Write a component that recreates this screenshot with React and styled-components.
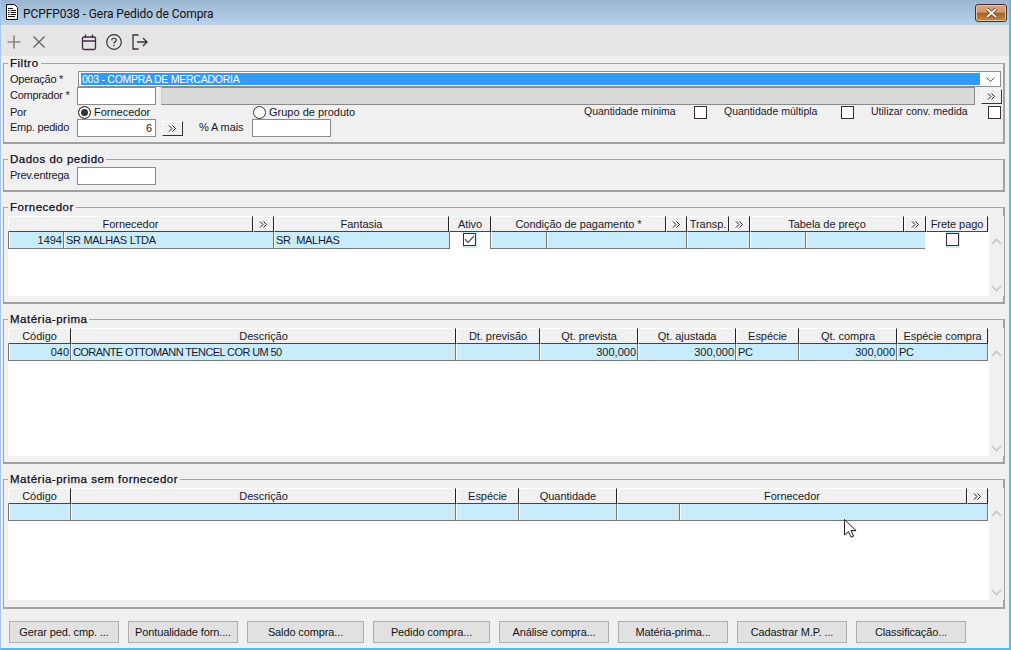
import React from "react";
import styled, { createGlobalStyle } from "styled-components";

const GlobalStyle = createGlobalStyle`
    html, body {
        margin: 0;
        padding: 0;
        background: #f0f0f0;
    }
    * {
        box-sizing: border-box;
    }
`;

const fornecedorHead = [
    { w: 245, label: "Fornecedor" },
    { w: 21, more: true },
    { w: 175, label: "Fantasia" },
    { w: 42, label: "Ativo" },
    { w: 175, label: "Condição de pagamento *" },
    { w: 21, more: true },
    { w: 42, label: "Transp." },
    { w: 21, more: true },
    { w: 154, label: "Tabela de preço" },
    { w: 22, more: true },
    { w: 62, label: "Frete pago" },
];

const fornecedorRow = [
    { w: 55, text: "1494", right: true },
    { w: 210, text: "SR MALHAS LTDA", tight: 0.3 },
    { w: 176, text: "SR  MALHAS", tight: 0.3 },
    { w: 41, check: "on" },
    { w: 56 },
    { w: 140 },
    { w: 63 },
    { w: 56 },
    { w: 120 },
    { w: 63, check: "off" },
];

const materiaHead = [
    { w: 63, label: "Código" },
    { w: 385, label: "Descrição" },
    { w: 84, label: "Dt. previsão" },
    { w: 98, label: "Qt. prevista" },
    { w: 98, label: "Qt. ajustada" },
    { w: 63, label: "Espécie" },
    { w: 98, label: "Qt. compra" },
    { w: 91, label: "Espécie compra" },
];

const materiaRow = [
    { w: 62, text: "040", right: true },
    { w: 385, text: "CORANTE OTTOMANN TENCEL COR UM 50", tight: 0.6 },
    { w: 84 },
    { w: 98, text: "300,000", right: true },
    { w: 98, text: "300,000", right: true },
    { w: 63, text: "PC", tight: 0.3 },
    { w: 98, text: "300,000", right: true },
    { w: 92, text: "PC", tight: 0.3 },
];

const semFornHead = [
    { w: 63, label: "Código" },
    { w: 385, label: "Descrição" },
    { w: 63, label: "Espécie" },
    { w: 98, label: "Quantidade" },
    { w: 350, label: "Fornecedor" },
    { w: 21, more: true },
];

const semFornRow = [
    { w: 62 },
    { w: 385 },
    { w: 63 },
    { w: 98 },
    { w: 63 },
    { w: 309 },
];

const footerButtons = [
    { w: 110, label: "Gerar ped. cmp. ..." },
    { w: 110, label: "Pontualidade forn...." },
    { w: 117, label: "Saldo compra..." },
    { w: 117, label: "Pedido compra..." },
    { w: 110, label: "Análise compra..." },
    { w: 110, label: "Matéria-prima..." },
    { w: 110, label: "Cadastrar M.P. ..." },
    { w: 110, label: "Classificação..." },
];

const MoreIcon = () => (
    <svg width="9" height="7" viewBox="0 0 9 7" fill="none" stroke="#222" strokeWidth="1">
        <path d="M1 0.5 L4 3.5 L1 6.5 M4.5 0.5 L7.5 3.5 L4.5 6.5" />
    </svg>
);

const ScrollArrow = ({ down }) => (
    <svg width="11" height="7" viewBox="0 0 11 7" fill="none" stroke="#c4c4c4" strokeWidth="1.6">
        <path d={down ? "M1 1 L5.5 5.5 L10 1" : "M1 6 L5.5 1.5 L10 6"} />
    </svg>
);

const Scrollbar = () => (
    <ScrollTrack>
        <ScrollArrow />
        <ScrollArrow down />
    </ScrollTrack>
);

const DataGrid = ({ head, row, height }) => (
    <GridBody $height={height}>
        <GridMain>
            <HeadRow>
                {head.map((col, i) =>
                    col.more ? (
                        <MoreHead key={i} $w={col.w}>
                            <MoreIcon />
                        </MoreHead>
                    ) : (
                        <HeadCell key={i} $w={col.w}>
                            {col.label}
                        </HeadCell>
                    ),
                )}
            </HeadRow>
            <DataRow>
                {row.map((cell, i) =>
                    cell.check ? (
                        <CheckCell key={i} $w={cell.w}>
                            <CheckBack>
                                <CheckBox>
                                    {cell.check === "on" && (
                                        <svg width="11" height="9" viewBox="0 0 11 9" fill="none" stroke="#5a5a5a" strokeWidth="1.3">
                                            <path d="M1 4 L4 7.5 L10 1" />
                                        </svg>
                                    )}
                                </CheckBox>
                            </CheckBack>
                        </CheckCell>
                    ) : (
                        <DataCell key={i} $w={cell.w} $right={cell.right} $tight={cell.tight}>
                            {cell.text}
                        </DataCell>
                    ),
                )}
            </DataRow>
        </GridMain>
        <Scrollbar />
    </GridBody>
);

const App = () => (
    <Page>
        <GlobalStyle />
        <TitleBar>
            <TitleIcon width="14" height="17" viewBox="0 0 14 17">
                <path d="M1.5 0.5 H9.5 L12.5 3.5 V15.5 H1.5 Z" fill="#fff" stroke="#111" />
                <path d="M3 4.5 H8 M3 6.5 H4.5 M5.5 6.5 H11 M3 8.5 H4.5 M5.5 8.5 H11 M3 10.5 H4.5 M5.5 10.5 H11 M3 12.5 H10" stroke="#111" />
            </TitleIcon>
            <TitleText>PCPFP038 - Gera Pedido de Compra</TitleText>
            <CloseButton>
                <svg width="13" height="10" viewBox="0 0 13 10">
                    <path d="M2 1 L11 9 M11 1 L2 9" stroke="#4c3a2a" strokeWidth="3.4" />
                    <path d="M2 1 L11 9 M11 1 L2 9" stroke="#f4f1ec" strokeWidth="2" />
                </svg>
            </CloseButton>
        </TitleBar>
        <Toolbar>
            <ToolSvg width="16" height="16" viewBox="0 0 16 16" stroke="#8a8a8a" $after={5}>
                <path d="M8 1.5 V14.5 M1.5 8 H14.5" strokeWidth="1.7" />
            </ToolSvg>
            <ToolSvg width="16" height="16" viewBox="0 0 16 16" stroke="#5f5f5f" $after={9}>
                <path d="M2.5 2.5 L13.5 13.5 M13.5 2.5 L2.5 13.5" strokeWidth="1.2" />
            </ToolSvg>
            <ToolSvg width="16" height="17" viewBox="0 0 16 17" stroke="#3d2f3a" $after={34}>
                <rect x="1.5" y="3" width="13" height="12.5" rx="1.5" strokeWidth="1.3" />
                <path d="M1.5 7 H14.5 M4.5 0.5 V4 M11.5 0.5 V4" strokeWidth="1.3" />
            </ToolSvg>
            <ToolSvg width="16" height="16" viewBox="0 0 16 16" stroke="#3d2f3a" $after={9}>
                <circle cx="8" cy="8" r="7.3" strokeWidth="1.2" />
                <path d="M5.8 6.2 C5.8 3.6 10.2 3.6 10.2 6.2 C10.2 7.8 8 7.8 8 9.6 M8 10.8 V12.2" strokeWidth="1.2" />
            </ToolSvg>
            <ToolSvg width="16" height="16" viewBox="0 0 16 16" stroke="#3d2f3a" $after={10}>
                <path d="M6.5 1 H1 V15 H6.5 M5 8 H15 M11 4 L15 8 L11 12" strokeWidth="1.3" />
            </ToolSvg>
        </Toolbar>
        <Content>
            <Panel $height={88}>
                <Legend>Filtro</Legend>
                <FormRow $height={16}>
                    <FieldLabel>Operação *</FieldLabel>
                    <SelectBox>
                        <SelectValue>003 - COMPRA DE MERCADORIA</SelectValue>
                        <SelectArrow width="9" height="6" viewBox="0 0 9 6" fill="none" stroke="#555">
                            <path d="M0.5 0.5 L4.5 4.5 L8.5 0.5" />
                        </SelectArrow>
                    </SelectBox>
                </FormRow>
                <FormRow $height={18}>
                    <FieldLabel $up>Comprador *</FieldLabel>
                    <TextBox />
                    <ReadOnlyBox />
                    <MoreButton>
                        <MoreIcon />
                    </MoreButton>
                </FormRow>
                <FormRow $height={14}>
                    <FieldLabel>Por</FieldLabel>
                    <RadioOption $w={174}>
                        <Radio $on />
                        Fornecedor
                    </RadioOption>
                    <RadioOption $w={331}>
                        <Radio />
                        Grupo de produto
                    </RadioOption>
                    <CheckLabel $w={110}>Quantidade mínima</CheckLabel>
                    <CheckBox />
                    <CheckLabel $w={117} $gap={17}>Quantidade múltipla</CheckLabel>
                    <CheckBox />
                    <CheckLabel $w={117} $gap={17}>Utilizar conv. medida</CheckLabel>
                    <CheckBox />
                </FormRow>
                <FormRow $height={18}>
                    <FieldLabel $up>Emp. pedido</FieldLabel>
                    <TextBox $right>6</TextBox>
                    <MoreButton>
                        <MoreIcon />
                    </MoreButton>
                    <InlineLabel>% A mais</InlineLabel>
                    <TextBox />
                </FormRow>
            </Panel>
            <Panel $height={40}>
                <Legend>Dados do pedido</Legend>
                <FormRow $height={18}>
                    <FieldLabel $up>Prev.entrega</FieldLabel>
                    <TextBox />
                </FormRow>
            </Panel>
            <GridPanel $height={104}>
                <Legend>Fornecedor</Legend>
                <DataGrid head={fornecedorHead} row={fornecedorRow} height={80} />
            </GridPanel>
            <GridPanel $height={152}>
                <Legend>Matéria-prima</Legend>
                <DataGrid head={materiaHead} row={materiaRow} height={128} />
            </GridPanel>
            <GridPanel $height={137}>
                <Legend>Matéria-prima sem fornecedor</Legend>
                <DataGrid head={semFornHead} row={semFornRow} height={112} />
            </GridPanel>
        </Content>
        <Footer>
            {footerButtons.map((b) => (
                <FooterButton key={b.label} $w={b.w}>
                    {b.label}
                </FooterButton>
            ))}
        </Footer>
        <Cursor width="18" height="22" viewBox="0 0 18 22">
            <path d="M2.5 2.5 V18.5 L6.5 15 L9 20.5 L12 19 L9.5 14 H14.5 Z" fill="#b9b9b9" opacity="0.5" />
            <path d="M1.5 1.5 V17 L5.5 13.5 L8 19 L10.5 18 L8 12.5 H13 Z" fill="#fff" stroke="#2a1a2a" strokeWidth="1" />
        </Cursor>
    </Page>
);

const Page = styled.div`
    position: relative;
    width: 1011px;
    height: 650px;
    overflow: hidden;
    display: flex;
    flex-direction: column;
    background: #f0f0f0;
    font-family: "Liberation Sans", Arial, sans-serif;
    font-size: 11px;
    color: #1a1a2a;
    border-left: 1px solid #a4c6ea;
    border-right: 2px solid #4fc0ea;
    border-bottom: 2px solid #4fc0ea;
`;

const TitleBar = styled.div`
    height: 25px;
    flex: none;
    display: flex;
    align-items: center;
    padding: 0 2px 0 4px;
    background: linear-gradient(#9bb6d0, #b9d2ec);
`;

const TitleIcon = styled.svg`
    flex: none;
`;

const TitleText = styled.div`
    flex: 1;
    margin-left: 4px;
    padding-top: 2px;
    font-family: Roboto, "Liberation Sans", sans-serif;
    font-size: 12px;
    letter-spacing: -0.08px;
    color: #111;
`;

const CloseButton = styled.div`
    width: 32px;
    height: 18px;
    display: flex;
    align-items: center;
    justify-content: center;
    border: 1px solid #4a2c25;
    border-radius: 3px;
    box-shadow: inset 0 0 0 1px #e8c5a8;
    background: linear-gradient(#d8a780 0, #d09a6e 45%, #ab5f1f 50%, #c58a4f 100%);
`;

const Toolbar = styled.div`
    height: 31px;
    flex: none;
    display: flex;
    align-items: center;
    padding-top: 3px;
    background: #e5e5e5;
`;

const ToolSvg = styled.svg`
    flex: none;
    fill: none;
    margin-left: ${(p) => p.$after}px;
`;

const Content = styled.div`
    display: flex;
    flex-direction: column;
    gap: 8px;
    padding: 0 4px 0 2px;
`;

const Panel = styled.fieldset`
    height: ${(p) => p.$height}px;
    min-width: 0;
    margin: 0;
    padding: 1px 2px 0 3px;
    border: solid #a2a2a2;
    border-width: 1px 2px 2px 1px;
`;

const GridPanel = styled(Panel)`
    padding: 2px 0 0 3px;
`;

const Legend = styled.legend`
    margin-left: 1px;
    padding: 0 2px;
    font-size: 11.5px;
    line-height: 14px;
    letter-spacing: 0.5px;
    color: #0c0c1c;
    -webkit-text-stroke: 0.25px #0c0c1c;
`;

const FormRow = styled.div`
    height: ${(p) => p.$height}px;
    margin-left: 3px;
    display: flex;
    align-items: center;
`;

const FieldLabel = styled.div`
    width: 67px;
    flex: none;
    padding-bottom: ${(p) => (p.$up ? 2 : 0)}px;
    letter-spacing: -0.25px;
`;

const InlineLabel = styled.div`
    width: 69px;
    flex: none;
    padding: 0 0 2px 16px;
    letter-spacing: -0.1px;
    white-space: nowrap;
`;

const SelectBox = styled.div`
    width: 924px;
    height: 16px;
    margin-left: 1px;
    display: flex;
    align-items: center;
    padding: 0 0 0 2px;
    background: #fff;
    border: 1px solid #8f8f8f;
`;

const SelectValue = styled.div`
    flex: 1;
    height: 12px;
    line-height: 12px;
    padding-left: 1px;
    font-size: 10.5px;
    letter-spacing: -0.25px;
    background: #3399ff;
    color: #fff;
`;

const SelectArrow = styled.svg`
    flex: none;
    margin: 2px 5px 0 6px;
`;

const TextBox = styled.div`
    width: 79px;
    height: 18px;
    flex: none;
    line-height: 16px;
    padding-right: 3px;
    text-align: ${(p) => (p.$right ? "right" : "left")};
    background: #fff;
    border: 1px solid #8a8a8a;
`;

const ReadOnlyBox = styled.div`
    width: 814px;
    height: 18px;
    flex: none;
    margin-left: 5px;
    background: #dadada;
    border: 1px solid #8a8a8a;
    border-left-color: #cfcfcf;
`;

const MoreButton = styled.div`
    width: 21px;
    height: 15px;
    flex: none;
    margin-left: 6px;
    display: flex;
    align-items: center;
    justify-content: center;
    background: #f0f0f0;
    border: 1px solid #fff;
    border-right-color: #333;
    border-bottom-color: #333;
`;

const RadioOption = styled.div`
    width: ${(p) => p.$w}px;
    flex: none;
    display: flex;
    align-items: center;
    gap: 3px;
    margin-left: 1px;
    white-space: nowrap;
`;

const Radio = styled.span`
    width: 13px;
    height: 13px;
    flex: none;
    border-radius: 50%;
    border: 1px solid #333;
    background: ${(p) => (p.$on ? "#333" : "#fff")};
    box-shadow: ${(p) => (p.$on ? "inset 0 0 0 2px #fff" : "none")};
`;

const CheckLabel = styled.div`
    width: ${(p) => p.$w}px;
    margin-left: ${(p) => p.$gap || 0}px;
    padding-bottom: 2px;
    flex: none;
    white-space: nowrap;
    font-size: 10.5px;
`;

const CheckBox = styled.span`
    width: 13px;
    height: 13px;
    flex: none;
    display: flex;
    align-items: center;
    justify-content: center;
    background: #fff;
    border: 1px solid #3a2a3a;
`;

const GridBody = styled.div`
    height: ${(p) => p.$height}px;
    margin-left: 1px;
    display: flex;
    background: #fff;
`;

const GridMain = styled.div`
    width: 981px;
    flex: none;
`;

const HeadRow = styled.div`
    height: 16px;
    display: flex;
    background: #f0f0f0;
`;

const HeadCell = styled.div`
    width: ${(p) => p.$w}px;
    height: 16px;
    flex: none;
    line-height: 14px;
    text-align: center;
    white-space: nowrap;
    overflow: hidden;
    letter-spacing: -0.05px;
    background: #f0f0f0;
    border: 1px solid #fff;
    border-right-color: #222;
    border-bottom-color: #444;
`;

const MoreHead = styled(HeadCell)`
    display: flex;
    align-items: center;
    justify-content: center;
`;

const DataRow = styled.div`
    height: 17px;
    display: flex;
    background: #fff;
`;

const DataCell = styled.div`
    width: ${(p) => p.$w}px;
    height: 17px;
    flex: none;
    line-height: 16px;
    padding: 0 1px 0 2px;
    text-align: ${(p) => (p.$right ? "right" : "left")};
    letter-spacing: ${(p) => (p.$tight ? -p.$tight : 0)}px;
    white-space: pre;
    background: #c8ecfb;
    border-left: 1px solid #777;
    border-bottom: 1px solid #777;
    box-shadow: inset 1px 0 0 #fff;

    &:last-child {
        border-right: 1px solid #777;
    }
`;

const CheckCell = styled.div`
    width: ${(p) => p.$w}px;
    height: 17px;
    flex: none;
    display: flex;
    justify-content: center;
    background: #fff;
    border-left: 1px solid #777;

    &:last-child {
        padding-right: 8px;
        border-left-color: #fff;
    }
`;

const CheckBack = styled.div`
    height: 16px;
    width: 14px;
    padding-top: 1px;
    background: #c8ecfb;
`;

const ScrollTrack = styled.div`
    width: 15px;
    flex: none;
    display: flex;
    flex-direction: column;
    justify-content: space-between;
    align-items: center;
    padding: 22px 0 4px;
    background: #f0f0f0;
`;

const Footer = styled.div`
    display: flex;
    gap: 9px;
    padding: 12px 0 0 8px;
`;

const FooterButton = styled.div`
    width: ${(p) => p.$w}px;
    height: 22px;
    flex: none;
    line-height: 20px;
    text-align: center;
    letter-spacing: -0.12px;
    color: #151515;
    background: #e1e1e1;
    border: 1px solid #adadad;
`;

const Cursor = styled.svg`
    position: absolute;
    left: 842px;
    top: 518px;
`;

export default App;
